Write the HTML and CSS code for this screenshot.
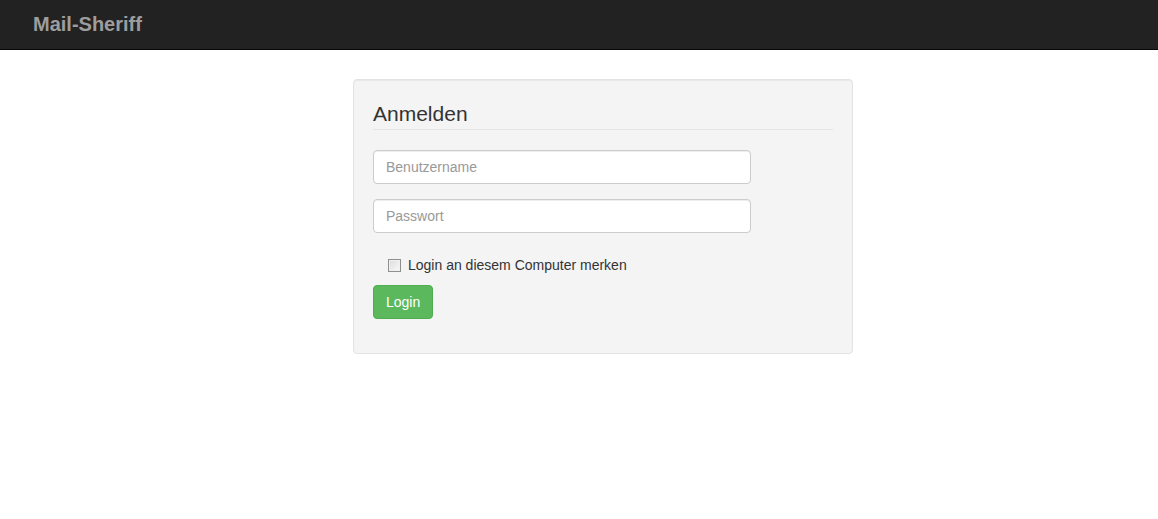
FILE: index.html
```html
<!DOCTYPE html>
<html lang="de">
<head>
    <meta charset="UTF-8">
    <meta name="viewport" content="width=device-width, initial-scale=1.0">
    <title>Mail-Sheriff - Anmelden</title>
    <link rel="stylesheet" href="styles.css">
</head>
<body>
    <nav class="navbar">
        <a class="brand" href="#">Mail-Sheriff</a>
    </nav>

    <div class="page">
        <form class="well" onsubmit="return false;">
            <legend class="legend">Anmelden</legend>

            <div class="form-group">
                <input type="text" class="form-control" placeholder="Benutzername">
            </div>

            <div class="form-group">
                <input type="password" class="form-control" placeholder="Passwort">
            </div>

            <div class="checkbox">
                <label>
                    <input type="checkbox" class="check">
                    Login an diesem Computer merken
                </label>
            </div>

            <div class="form-group">
                <button type="submit" class="btn-success">Login</button>
            </div>
        </form>
    </div>
</body>
</html>
```

FILE: styles.css
```css
body {
    margin: 0;
    font-family: "Liberation Sans", Arial, sans-serif;
    font-size: 14px;
    line-height: 20px;
    color: #333;
    background-color: #fff;
}
.navbar {
    height: 49px;
    background-color: #222;
    border-bottom: 1px solid #080808;
    display: flex;
    align-items: center;
    padding-left: 33px;
}
.brand {
    color: #9d9d9d;
    font-size: 20px;
    font-weight: bold;
    text-decoration: none;
    line-height: 20px;
    margin-top: -1px;
}
.page {
    width: 500px;
    margin: 29px 0 0 calc(50% - 226px);
}
.well {
    margin: 0;
    padding: 19px;
    background-color: #f4f4f4;
    border: 1px solid #e3e3e3;
    border-radius: 4px;
    box-shadow: inset 0 1px 1px rgba(0,0,0,0.05);
}
.legend {
    display: block;
    width: 100%;
    padding: 0;
    margin-bottom: 20px;
    font-size: 21px;
    line-height: 30px;
    color: #333;
    border-bottom: 1px solid #e5e5e5;
}
.form-group {
    margin-bottom: 15px;
}
.form-control {
    display: block;
    box-sizing: border-box;
    width: 378px;
    height: 34px;
    padding: 6px 12px;
    font-family: inherit;
    font-size: 14px;
    line-height: 20px;
    color: #555;
    background-color: #fff;
    border: 1px solid #ccc;
    border-radius: 4px;
    box-shadow: inset 0 1px 1px rgba(0,0,0,0.075);
}
.form-control::placeholder {
    color: #999;
}
.checkbox {
    margin: 0 0 10px;
    padding-top: 7px;
}
.checkbox label {
    display: flex;
    align-items: center;
    padding-left: 15px;
    cursor: pointer;
}
.check {
    appearance: none;
    width: 13px;
    height: 13px;
    margin: 0 7px 0 0;
    border: 1px solid #8e8f8f;
    background: linear-gradient(135deg, #dcdcdc, #fafafa);
    box-shadow: inset 0 0 0 1px #f0f0f0;
}
.btn-success {
    height: 34px;
    padding: 6px 12px;
    font-family: inherit;
    font-size: 14px;
    line-height: 20px;
    color: #fff;
    background-color: #5cb85c;
    border: 1px solid #4cae4c;
    border-radius: 4px;
    cursor: pointer;
}
.btn-success:hover {
    background-color: #449d44;
}
```
